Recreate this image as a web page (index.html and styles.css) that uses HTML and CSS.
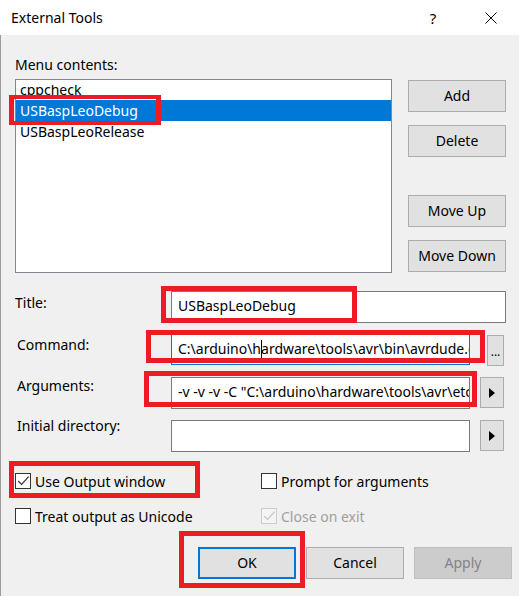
FILE: index.html
```html
<!DOCTYPE html>
<html>
<head>
<meta charset="utf-8">
<title>External Tools</title>
<link rel="stylesheet" href="styles.css">
</head>
<body>
<div class="dialog">
  <div class="titlebar">
    <span class="title">External Tools</span>
    <span class="help">?</span>
    <span class="close"><svg width="12" height="12" viewBox="0 0 12 12"><path d="M0.5 0.5L11.5 11.5M11.5 0.5L0.5 11.5" stroke="#000" stroke-width="1" fill="none"/></svg></span>
  </div>
  <div class="content">
    <div class="menu-label">Menu contents:</div>
    <div class="list-row">
      <div class="listbox">
        <div class="item first">cppcheck</div>
        <div class="item selected">USBaspLeoDebug</div>
        <div class="item">USBaspLeoRelease</div>
      </div>
      <div class="side-buttons">
        <button class="btn">Add</button>
        <button class="btn btn-gap">Delete</button>
        <button class="btn btn-up">Move Up</button>
        <button class="btn btn-gap">Move Down</button>
      </div>
    </div>
    <div class="fields">
      <div class="field-label lbl-title">Title:</div>
      <div class="textbox wide">USBaspLeoDebug</div>

      <div class="field-label lbl-cmd">Command:</div>
      <div class="textbox focused">C:\arduino\h<span class="caret"></span>ardware\tools\avr\bin\avrdude.exe</div>
      <div class="sbtn dots">...</div>

      <div class="field-label lbl-args">Arguments:</div>
      <div class="textbox">-v -v -v -C "C:\arduino\hardware\tools\avr\etc\avrdude.conf" -p atmega32u4 -c usbasp</div>
      <div class="sbtn arrow"><svg width="6" height="10" viewBox="0 0 6 10"><path d="M0 0L6 5L0 10Z" fill="#000"/></svg></div>

      <div class="field-label lbl-dir">Initial directory:</div>
      <div class="textbox"></div>
      <div class="sbtn arrow"><svg width="6" height="10" viewBox="0 0 6 10"><path d="M0 0L6 5L0 10Z" fill="#000"/></svg></div>
    </div>
    <div class="checks">
      <div class="check">
        <svg class="cb" width="16" height="16" viewBox="0 0 16 16"><rect x="0.5" y="0.5" width="15" height="15" fill="#fff" stroke="#333"/><path d="M3.2 8L6.6 11.4L13.6 3.6" fill="none" stroke="#333" stroke-width="1.2"/></svg>
        <span>Use Output window</span>
      </div>
      <div class="check">
        <svg class="cb" width="16" height="16" viewBox="0 0 16 16"><rect x="0.5" y="0.5" width="15" height="15" fill="#fff" stroke="#333"/></svg>
        <span>Prompt for arguments</span>
      </div>
      <div class="check">
        <svg class="cb" width="16" height="16" viewBox="0 0 16 16"><rect x="0.5" y="0.5" width="15" height="15" fill="#fff" stroke="#333"/></svg>
        <span>Treat output as Unicode</span>
      </div>
      <div class="check disabled">
        <svg class="cb" width="16" height="16" viewBox="0 0 16 16"><rect x="0.5" y="0.5" width="15" height="15" fill="#f4f4f4" stroke="#cccccc"/><path d="M3.2 8L6.6 11.4L13.6 3.6" fill="none" stroke="#c4c4c4" stroke-width="1.2"/></svg>
        <span>Close on exit</span>
      </div>
    </div>
    <div class="actions">
      <button class="btn default">OK</button>
      <button class="btn">Cancel</button>
      <button class="btn disabled-btn">Apply</button>
    </div>
  </div>

  <div class="mark m1"></div>
  <div class="mark m2"></div>
  <div class="mark m3"></div>
  <div class="mark m4"></div>
  <div class="mark m5"></div>
  <div class="mark m6"></div>
</div>
</body>
</html>
```
FILE: styles.css
```css
* { box-sizing: border-box; }
html, body { margin: 0; padding: 0; }
body {
  width: 519px;
  height: 596px;
  overflow: hidden;
  font-family: "Noto Sans", "Open Sans", sans-serif;
  font-size: 14px;
  color: #000;
  background: #f0f0f0;
}
.dialog {
  position: relative;
  width: 519px;
  height: 596px;
  background: #f0f0f0;
}
.titlebar {
  height: 35px;
  background: #fff;
  display: flex;
  align-items: center;
  padding-left: 11px;
  line-height: 20px;
  font-size: 14px;
}
.title { flex: 1; }
.help { width: 40px; text-align: center; margin-right: 10px; font-size: 15px; }
.close { width: 56px; display: flex; justify-content: center; }

.content {
  border-left: 1px solid #9a9a9a;
  padding: 19px 13px 0 14px;
  height: 561px;
}
.menu-label { line-height: 20px; padding-top: 1px; height: 20px; }

.list-row {
  display: flex;
  gap: 16px;
  margin-top: 5px;
  height: 194px;
}
.listbox {
  width: 377px;
  height: 194px;
  background: #fff;
  border: 1px solid #828790;
  overflow: hidden;
}
.item {
  height: 21px;
  line-height: 22px;
  padding-left: 4px;
  white-space: nowrap;
}
.item.first {
  margin-top: -1px;
  clip-path: inset(6px 0 0 0);
}
.item.selected { background: #0078d7; color: #fff; }

.side-buttons {
  width: 98px;
  display: flex;
  flex-direction: column;
  padding-top: 1px;
}
.btn {
  width: 98px;
  height: 32px;
  padding: 0;
  background: #e1e1e1;
  border: 1px solid #adadad;
  font: inherit;
  line-height: 20px;
  color: #000;
}
.btn-gap { margin-top: 13px; }
.btn-up { margin-top: 38px; }

.fields {
  display: grid;
  grid-template-columns: 156px 299px 36px;
  grid-auto-rows: 32px;
  row-gap: 11px;
  margin-top: 18px;
}
.field-label { line-height: 20px; padding-left: 2px; }
.lbl-title { padding-left: 0; margin-top: 2px; }
.lbl-cmd { margin-top: 1px; }
.lbl-args { margin-top: -1px; }
.lbl-dir { margin-top: -4px; }

.textbox {
  background: #fff;
  border: 1px solid #7a7a7a;
  padding: 0 0 0 6px;
  line-height: 28px;
  white-space: nowrap;
  overflow: hidden;
}
.textbox.wide { grid-column: 2 / 4; }
.textbox.focused { border-color: #0078d7; height: 31px; }
.caret {
  display: inline-block;
  width: 0;
  height: 18px;
  border-left: 1px solid #000;
  vertical-align: -4px;
  margin-right: -1px;
}

.sbtn {
  justify-self: end;
  margin-right: 2px;
  height: 31px;
  background: #e1e1e1;
  border: 1px solid #adadad;
}
.dots {
  width: 17px;
  margin-top: 1px;
  font-size: 12px;
  line-height: 12px;
  padding-top: 10px;
  text-align: center;
}
.arrow {
  width: 24px;
  display: flex;
  align-items: center;
  justify-content: center;
}
.arrow svg { margin-left: -1px; }

.checks {
  display: grid;
  grid-template-columns: 246px 1fr;
  grid-auto-rows: 20px;
  row-gap: 15px;
  margin-top: 19px;
}
.check {
  display: flex;
  align-items: center;
  gap: 4px;
  line-height: 20px;
  white-space: nowrap;
}
.check span { padding-top: 1px; }
.cb { flex: none; display: block; }
.check.disabled { color: #a0a0a0; }

.actions {
  display: flex;
  justify-content: flex-end;
  gap: 10px;
  margin-top: 21px;
  margin-right: -6px;
}
.btn.default { border: 2px solid #0078d7; }
.btn.disabled-btn { background: #cccccc; border-color: #bfbfbf; color: #838383; }

.mark {
  position: absolute;
  border: 5px solid #ed1c24;
  pointer-events: none;
}
.m1 { left: 9px; top: 95px; width: 152px; height: 30px; border-width: 4px 5px; }
.m2 { left: 161px; top: 286px; width: 196px; height: 37px; }
.m3 { left: 146px; top: 330px; width: 339px; height: 33px; }
.m4 { left: 144px; top: 371px; width: 333px; height: 36px; }
.m5 { left: 9px; top: 461px; width: 191px; height: 37px; }
.m6 { left: 179px; top: 531px; width: 126px; height: 57px; }
```
